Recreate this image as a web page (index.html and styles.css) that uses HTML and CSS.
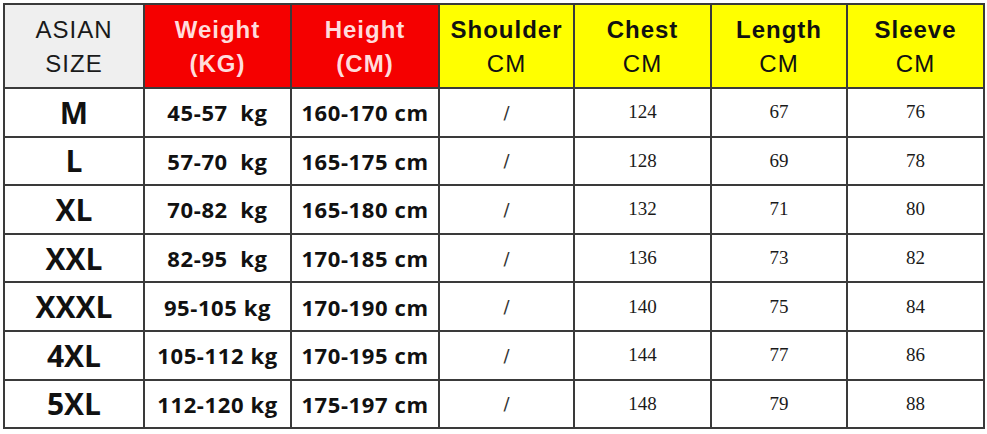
FILE: index.html
```html
<!DOCTYPE html>
<html>
<head>
<meta charset="utf-8">
<link rel="stylesheet" href="styles.css">
</head>
<body>
<div class="wrap">
<table class="chart">
  <colgroup>
    <col class="c1"><col class="c2"><col class="c3"><col class="c4"><col class="c5"><col class="c6"><col class="c7">
  </colgroup>
  <thead>
    <tr>
      <th class="h-gray">ASIAN<br>SIZE</th>
      <th class="h-red">Weight<br>(KG)</th>
      <th class="h-red">Height<br>(CM)</th>
      <th class="h-yellow"><b>Shoulder</b><br>CM</th>
      <th class="h-yellow"><b>Chest</b><br>CM</th>
      <th class="h-yellow"><b>Length</b><br>CM</th>
      <th class="h-yellow"><b>Sleeve</b><br>CM</th>
    </tr>
  </thead>
  <tbody>
    <tr><td class="size">M</td><td class="range">45-57&nbsp; kg</td><td class="range">160-170 cm</td><td class="num slash">/</td><td class="num">124</td><td class="num">67</td><td class="num">76</td></tr>
    <tr><td class="size">L</td><td class="range">57-70&nbsp; kg</td><td class="range">165-175 cm</td><td class="num slash">/</td><td class="num">128</td><td class="num">69</td><td class="num">78</td></tr>
    <tr><td class="size">XL</td><td class="range">70-82&nbsp; kg</td><td class="range">165-180 cm</td><td class="num slash">/</td><td class="num">132</td><td class="num">71</td><td class="num">80</td></tr>
    <tr><td class="size">XXL</td><td class="range">82-95&nbsp; kg</td><td class="range">170-185 cm</td><td class="num slash">/</td><td class="num">136</td><td class="num">73</td><td class="num">82</td></tr>
    <tr><td class="size">XXXL</td><td class="range">95-105 kg</td><td class="range">170-190 cm</td><td class="num slash">/</td><td class="num">140</td><td class="num">75</td><td class="num">84</td></tr>
    <tr><td class="size">4XL</td><td class="range">105-112 kg</td><td class="range">170-195 cm</td><td class="num slash">/</td><td class="num">144</td><td class="num">77</td><td class="num">86</td></tr>
    <tr><td class="size">5XL</td><td class="range">112-120 kg</td><td class="range">175-197 cm</td><td class="num slash">/</td><td class="num">148</td><td class="num">79</td><td class="num">88</td></tr>
  </tbody>
</table>
</div>
</body>
</html>
```
FILE: styles.css
```css
html, body {
  margin: 0;
  padding: 0;
  background: #ffffff;
}
.wrap {
  padding: 3px 0 0 3px;
}
.chart {
  border-collapse: collapse;
  table-layout: fixed;
  width: 980px;
  font-family: "Liberation Sans", Arial, sans-serif;
  color: #111;
}
.c1 { width: 140px; }
.c2 { width: 147px; }
.c3 { width: 148px; }
.c4 { width: 135px; }
.c5 { width: 137px; }
.c6 { width: 136px; }
.c7 { width: 137px; }
.chart th, .chart td {
  border: 2px solid #3a3a3a;
  padding: 0;
  text-align: center;
  vertical-align: middle;
}
.chart thead tr { height: 84px; }
.chart tbody tr { height: 48.6px; }
.chart th {
  font-size: 24px;
  line-height: 34px;
  font-weight: normal;
  letter-spacing: 1px;
  padding-top: 1px;
}
.chart th b { font-size: 24px; font-weight: bold; }
.h-gray { background: #efefef; color: #1a1a1a; }
.chart th.h-red { background: #f50000; color: #ffdcdc; font-weight: bold; font-size: 24px; }
.h-yellow { background: #ffff00; color: #111; }
.size {
  font-family: "Open Sans", sans-serif;
  font-weight: bold;
  font-size: 30px;
  color: #111;
}
.range {
  font-family: "Open Sans", sans-serif;
  font-weight: bold;
  font-size: 22px;
  letter-spacing: 0.6px;
  color: #111;
}
.num {
  font-family: "Liberation Serif", serif;
  font-size: 19px;
  color: #1a1a1a;
}
.chart td.slash {
  font-family: "DejaVu Sans", sans-serif;
  font-size: 18px;
  color: #333;
}
```
